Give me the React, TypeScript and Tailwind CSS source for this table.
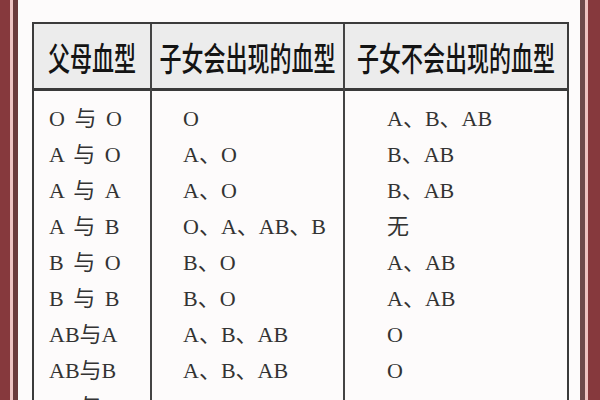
const rows = [
  ['O 与 O', 'O', 'A、B、AB'],
  ['A 与 O', 'A、O', 'B、AB'],
  ['A 与 A', 'A、O', 'B、AB'],
  ['A 与 B', 'O、A、AB、B', '无'],
  ['B 与 O', 'B、O', 'A、AB'],
  ['B 与 B', 'B、O', 'A、AB'],
  ['AB与A', 'A、B、AB', 'O'],
  ['AB与B', 'A、B、AB', 'O'],
  ['AB与AB', 'A、B、AB', 'O'],
];

const headers = ['父母血型', '子女会出现的血型', '子女不会出现的血型'];

const bodyFont = { fontFamily: '"Liberation Serif", "Noto Sans CJK SC", serif' };
const headFont = { fontFamily: '"Noto Sans CJK SC", sans-serif' };

const pads = ['pl-[15px]', 'pl-[31px]', 'pl-[42px]'];

export default function App() {
  return (
    <div className="flex h-[400px] w-[600px] overflow-hidden bg-[#fdfbfb]">
      {/* left frame */}
      <div className="flex h-full shrink-0">
        <div className="w-[10px] bg-[#86393d]" />
        <div className="w-[3px] bg-[#eec3c2]" />
        <div className="w-[5px] bg-[#6b3b3c]" />
      </div>

      <div className="flex-1 pl-[14px] pt-[22px]">
        <div className="grid w-[537px] grid-cols-[118px_193px_1fr] border-2 border-b-0 border-[#3b3b3b]">
          {headers.map((h, c) => (
            <div key={h} className={c < 2 ? 'border-r-2 border-[#444]' : ''}>
              <div className="flex h-[67px] items-center justify-center border-b-[3px] border-[#3a3a3a] bg-[#ececec]">
                <span
                  className="inline-block scale-y-[1.5] text-[22px] font-medium leading-none text-[#141414]"
                  style={headFont}
                >
                  {h}
                </span>
              </div>
              <div className="pt-[9px]">
                {rows.map((r, i) => (
                  <div
                    key={i}
                    className={`flex h-[36px] items-center whitespace-pre text-[22px] text-[#333] ${pads[c]} ${c === 0 ? '[word-spacing:4px]' : ''}`}
                    style={bodyFont}
                  >
                    {r[c]}
                  </div>
                ))}
              </div>
            </div>
          ))}
        </div>
      </div>

      {/* right frame */}
      <div className="flex h-full shrink-0">
        <div className="w-[5px] bg-[#6d4a4b]" />
        <div className="w-[3px] bg-[#eec3c2]" />
        <div className="w-[12px] bg-[#86393d]" />
      </div>
    </div>
  );
}
